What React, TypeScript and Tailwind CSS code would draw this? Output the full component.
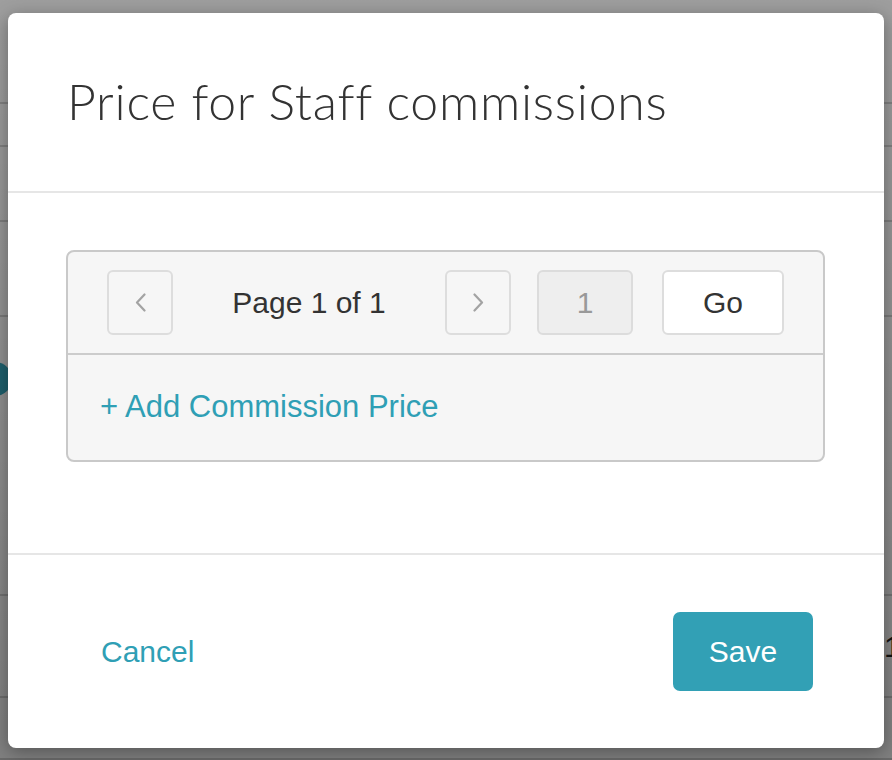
import React from 'react';

const rows = [
  { h: 'h-[104px]', content: null },
  { h: 'h-[43px]', content: null },
  { h: 'h-[75px]', content: null },
  { h: 'h-[95px]', content: null },
  { h: 'h-[279px]', content: 'dot' },
  { h: 'h-[102px]', content: 'num' },
  { h: 'h-[62px]', content: null },
];

function Chevron({ dir }: { dir: 'left' | 'right' }) {
  return (
    <svg width="11" height="19" viewBox="0 0 11 19" fill="none">
      <path
        d={dir === 'left' ? 'M9.5 1.5 L2 9.5 L9.5 17.5' : 'M1.5 1.5 L9 9.5 L1.5 17.5'}
        stroke="#a3a3a3"
        strokeWidth="2.2"
        strokeLinecap="round"
        strokeLinejoin="round"
      />
    </svg>
  );
}

export default function App() {
  return (
    <div className="relative w-[892px] h-[760px] overflow-hidden bg-white font-['Liberation_Sans',Arial,sans-serif]">
      {/* page behind the dialog */}
      <div className="flex flex-col">
        {rows.map((row, i) => (
          <div key={i} className={`${row.h} border-b-2 border-[#d4d4d4] flex`}>
            {row.content === 'dot' && (
              <div className="mt-[45px] -ml-[22px] w-[34px] h-[34px] rounded-full bg-[#35a9c0]" />
            )}
            {row.content === 'num' && (
              <span className="ml-[884px] self-center text-[30px] text-[#222]">1</span>
            )}
          </div>
        ))}
      </div>

      {/* backdrop */}
      <div className="absolute inset-0 bg-gradient-to-b from-black/[0.38] to-black/[0.50]">
        <div className="ml-[8px] mt-[13px] w-[876px] h-[735px] bg-white rounded-[8px] shadow-[0_4px_18px_rgba(0,0,0,0.35)] flex flex-col">
          {/* header */}
          <div className="h-[180px] pl-[59px] flex items-center border-b-2 border-[#e6e6e6]">
            <h1 className="font-['Lato',sans-serif] font-light text-[50px] text-[#333] tracking-[0.75px] -mt-[2px]">
              Price for Staff commissions
            </h1>
          </div>

          {/* body */}
          <div className="h-[362px] pl-[58px] pr-[59px] pt-[57px] border-b-2 border-[#e6e6e6]">
            <div className="border-2 border-[#c9c9c9] rounded-[8px] bg-[#f6f6f6]">
              <div className="h-[103px] pl-[39px] flex items-center border-b-2 border-[#cccccc]">
                <button className="w-[66px] h-[65px] border-2 border-[#dddddd] rounded-[6px] flex items-center justify-center">
                  <Chevron dir="left" />
                </button>
                <span className="w-[272px] text-center text-[30px] text-[#333]">Page 1 of 1</span>
                <button className="w-[66px] h-[65px] border-2 border-[#dddddd] rounded-[6px] flex items-center justify-center">
                  <Chevron dir="right" />
                </button>
                <div className="ml-[26px] w-[96px] h-[65px] border-2 border-[#dcdcdc] rounded-[6px] bg-[#eeeeee] flex items-center justify-center text-[30px] text-[#999]">
                  1
                </div>
                <button className="ml-[29px] w-[122px] h-[65px] border-2 border-[#dddddd] rounded-[6px] bg-white text-[30px] text-[#333]">
                  Go
                </button>
              </div>
              <div className="h-[105px] pl-[32px] flex items-center">
                <span className="text-[31px] text-[#2f9fb5]">+ Add Commission Price</span>
              </div>
            </div>
          </div>

          {/* footer */}
          <div className="flex-1 pl-[93px] pr-[71px] flex items-center justify-between">
            <span className="text-[30px] text-[#2f9fb5]">Cancel</span>
            <button className="w-[140px] h-[79px] rounded-[7px] bg-[#32a0b5] text-white text-[30px]">Save</button>
          </div>
        </div>
      </div>
    </div>
  );
}
